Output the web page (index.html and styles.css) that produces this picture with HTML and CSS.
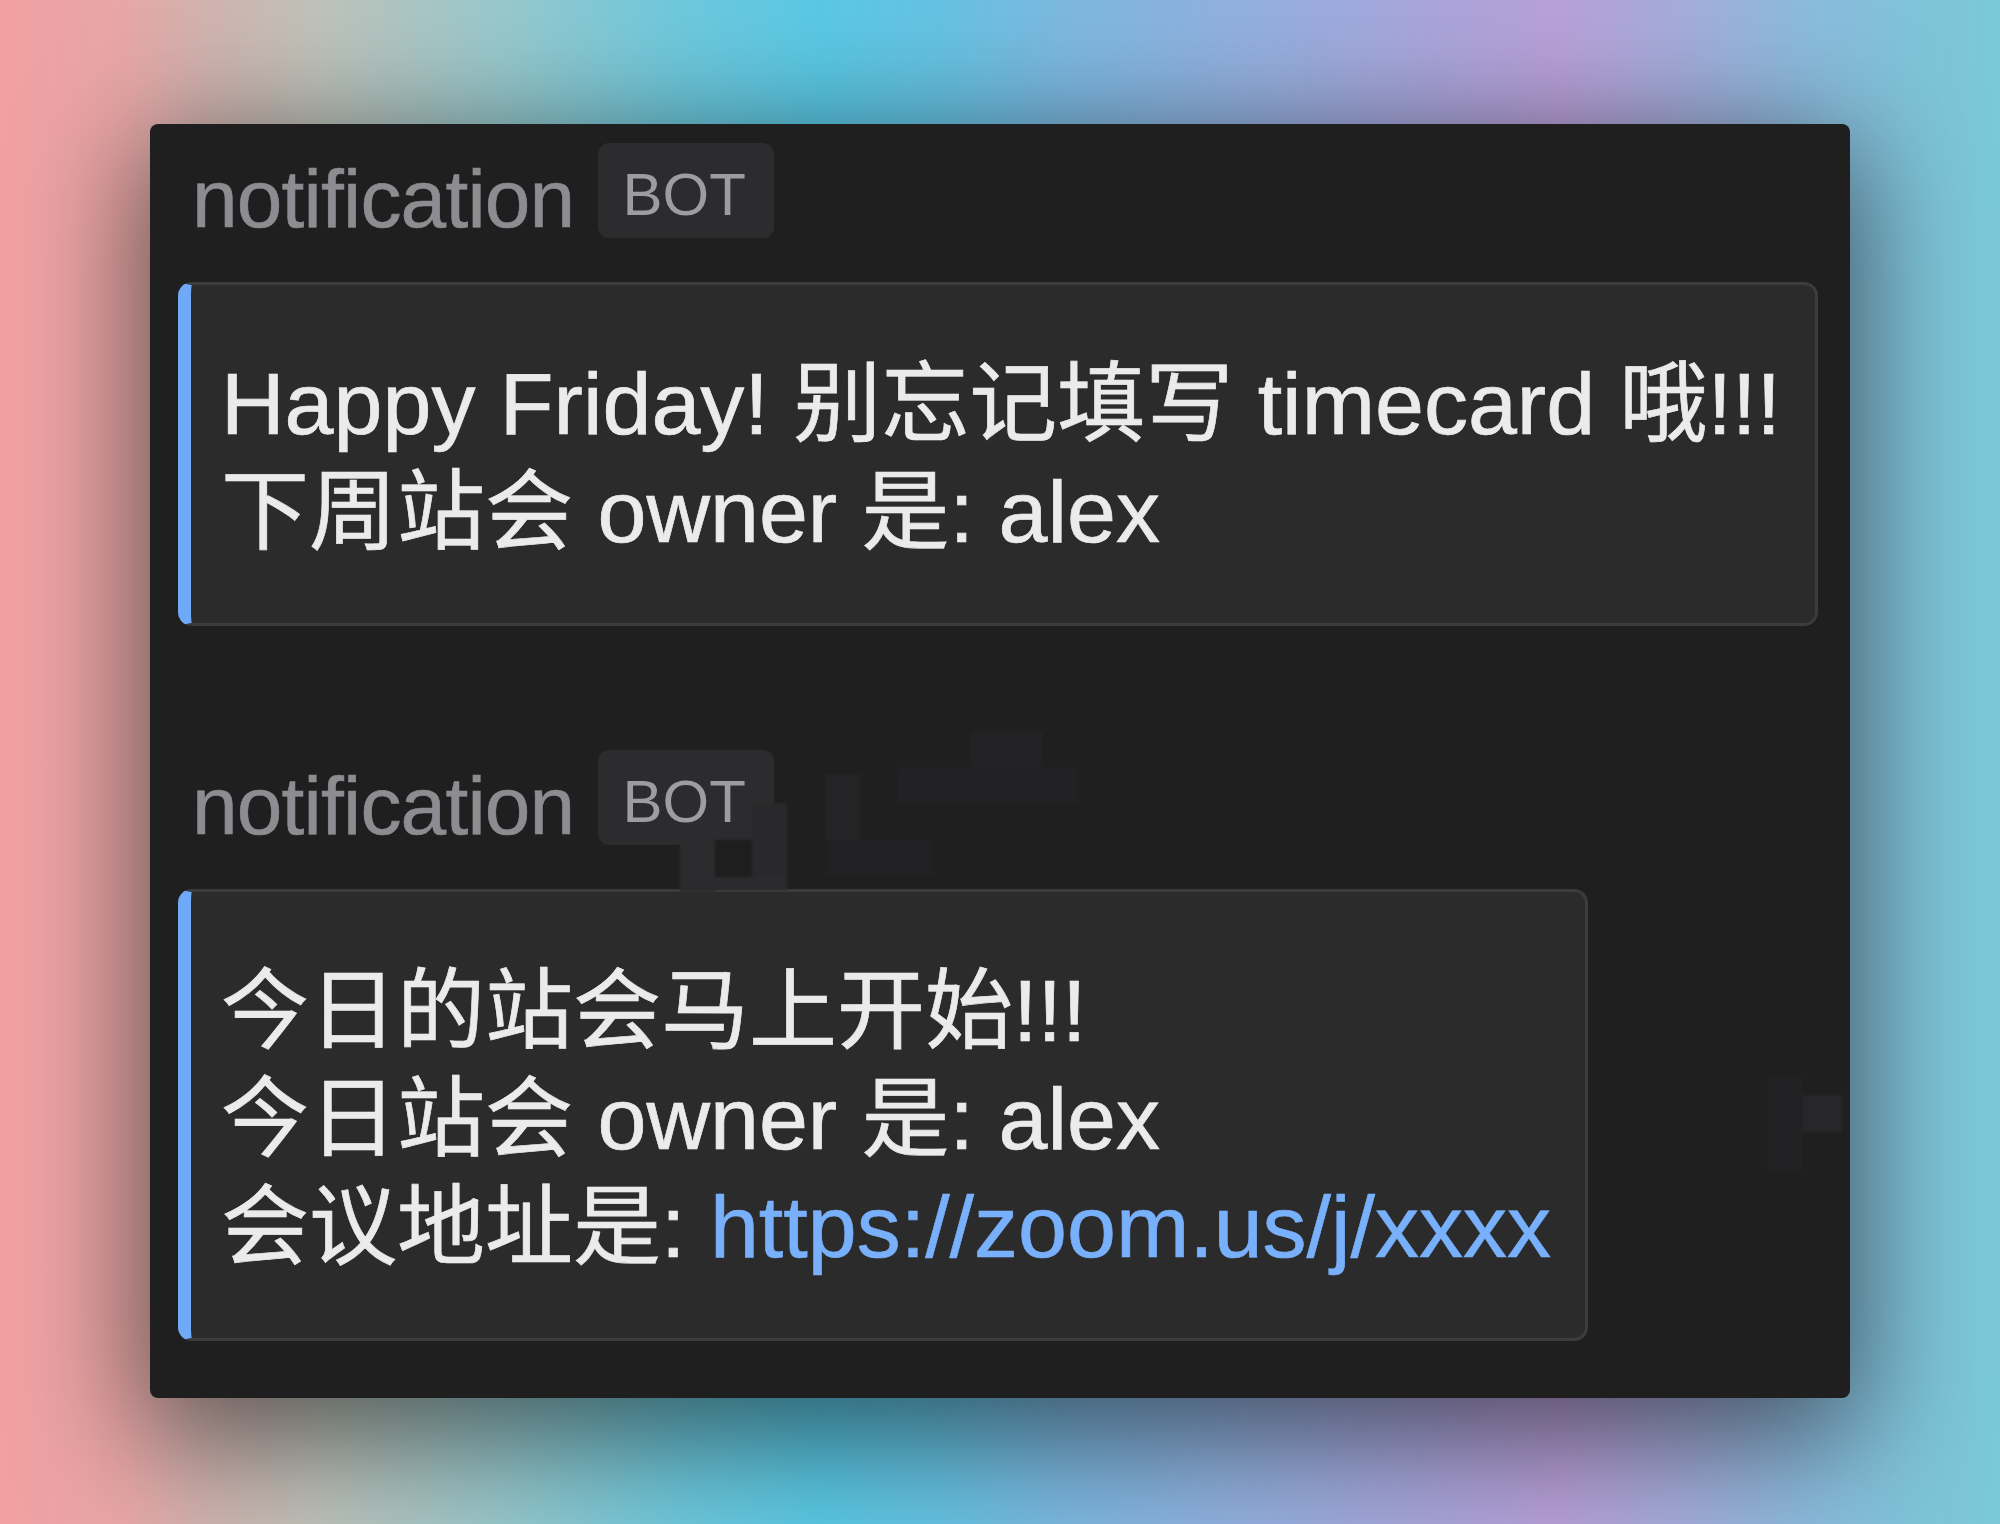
FILE: index.html
```html
<!DOCTYPE html>
<html lang="zh-CN">
<head>
<meta charset="utf-8">
<title>notification</title>
<link rel="stylesheet" href="styles.css">
</head>
<body>
<div class="stage">
  <section class="panel">
    <article class="msg">
      <header class="msg-head">
        <span class="name">notification</span>
        <span class="badge">BOT</span>
      </header>
      <div class="card">
        <div class="line">Happy Friday! 别忘记填写 timecard 哦!!!</div>
        <div class="line">下周站会 owner 是: alex</div>
      </div>
    </article>
    <article class="msg">
      <header class="msg-head">
        <span class="name">notification</span>
        <span class="badge">BOT</span>
      </header>
      <div class="card">
        <div class="line">今日的站会马上开始!!!</div>
        <div class="line">今日站会 owner 是: alex</div>
        <div class="line">会议地址是: <a class="link" href="#">https://zoom.us/j/xxxx</a></div>
      </div>
    </article>
    <div class="mosaic" aria-hidden="true">
      <i class="tile t1"></i><i class="tile t2"></i><i class="tile t3"></i><i class="tile t4"></i>
      <i class="tile t5"></i><i class="tile t6"></i><i class="tile t7"></i><i class="tile t8"></i>
      <i class="tile t9"></i><i class="tile t10"></i>
    </div>
  </section>
</div>
</body>
</html>
```

FILE: styles.css
```css
html, body {
  margin: 0;
  padding: 0;
}
body {
  width: 2000px;
  height: 1524px;
  overflow: hidden;
  background: linear-gradient(90deg,
    #f2a0a2 0%,
    #e8a6a6 6%,
    #d2b2ae 10%,
    #bec2ba 16%,
    #98c8cc 25%,
    #6ec8dc 34%,
    #5ac8e4 41%,
    #66c2e2 47%,
    #7cb8e0 53%,
    #92b0de 62%,
    #aaa4da 72%,
    #b8a0d8 78%,
    #a4acda 84%,
    #8cbadc 90%,
    #7ec4d8 96%,
    #7ac8d8 100%);
  font-family: "Liberation Sans", "Noto Sans CJK SC", sans-serif;
}
.stage {
  padding: 124px 0 0 150px;
}
.panel {
  position: relative;
  width: 1700px;
  box-sizing: border-box;
  padding: 19px 0 57px 28px;
  background: #1f1f1f;
  border-radius: 8px;
  box-shadow: 0 30px 120px 10px rgba(0, 0, 0, 0.55);
  display: flex;
  flex-direction: column;
  gap: 124px;
}
.msg {
  display: flex;
  flex-direction: column;
  align-items: flex-start;
  gap: 28px;
}
.msg-head {
  display: flex;
  align-items: flex-start;
  gap: 24px;
  padding-left: 14px;
}
.name {
  font-size: 82px;
  line-height: 111px;
  letter-spacing: -0.8px;
  color: #8d8d91;
  -webkit-text-stroke: 0.6px #8d8d91;
}
.badge {
  height: 95px;
  box-sizing: border-box;
  padding: 9px 28px 0 24px;
  font-size: 60px;
  line-height: 86px;
  color: #9d9da1;
  background: #2c2c2e;
  border-radius: 11px;
}
.card {
  position: relative;
  z-index: 0;
  background: #2b2b2b;
  border: 3px solid #3b3c3f;
  border-left: 13px solid #6fa9f8;
  border-radius: 14px;
  padding: 65px 34px 57px 30px;
  font-size: 88px;
  line-height: 108px;
  color: #ebebeb;
  -webkit-text-stroke: 0.7px #ebebeb;
  white-space: nowrap;
}
.line {
  display: block;
}
.link {
  color: #78b0fb;
  -webkit-text-stroke: 0.7px #78b0fb;
  text-decoration: none;
}
.mosaic {
  position: absolute;
  inset: 0;
  pointer-events: none;
  z-index: 1;
  filter: blur(1px);
}
.tile {
  position: absolute;
  display: block;
}
.t1 { left: 820px; top: 608px; width: 73px; height: 35px; background: #232325; }
.t2 { left: 747px; top: 643px; width: 181px; height: 36px; background: #222224; }
.t3 { left: 675px; top: 650px; width: 35px; height: 66px; background: #242426; }
.t4 { left: 602px; top: 679px; width: 35px; height: 74px; background: #29292b; }
.t5 { left: 530px; top: 716px; width: 35px; height: 52px; background: #2c2c2e; }
.t6 { left: 565px; top: 716px; width: 37px; height: 37px; background: #1e1e1f; }
.t7 { left: 530px; top: 753px; width: 107px; height: 13px; background: #2b2b2d; }
.t8 { left: 675px; top: 716px; width: 110px; height: 37px; background: #212123; }
.t9 { left: 1617px; top: 953px; width: 36px; height: 93px; background: #222224; }
.t10 { left: 1653px; top: 971px; width: 39px; height: 37px; background: #272729; }
```
